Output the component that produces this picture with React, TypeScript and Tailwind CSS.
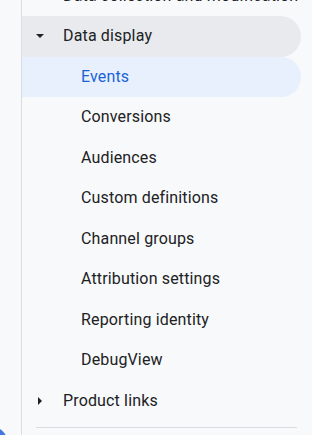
import React from 'react';

const subItems = [
  'Events',
  'Conversions',
  'Audiences',
  'Custom definitions',
  'Channel groups',
  'Attribution settings',
  'Reporting identity',
  'DebugView',
];

const Caret = ({ open }: { open: boolean }) => (
  <svg width="8" height="8" viewBox="0 0 8 8" className="shrink-0" style={{ transform: open ? undefined : 'rotate(-90deg)' }}>
    <path d="M0 2h8L4 6z" fill="#202124" />
  </svg>
);

const App = () => {
  return (
    <div className="relative w-[312px] h-[435px] overflow-hidden bg-[#f8f9fa] flex" style={{ fontFamily: 'Roboto, "Noto Sans", sans-serif' }}>
      <div className="w-[22px] shrink-0 border-r border-[#dadce0]" />
      <div className="flex-1 min-w-0 -mt-[24.5px] text-[16px] tracking-[0.15px]">
        <div className="h-[40.5px] flex items-center pl-[41px] pr-[4px] text-[#202124]">
          <span className="truncate">Data collection and modification</span>
        </div>
        <div className="h-[40.5px] mr-[11px] rounded-r-full bg-[#e8eaed] flex items-center pl-[14px] text-[#202124]">
          <Caret open />
          <span className="ml-[19px]">Data display</span>
        </div>
        {subItems.map((item, i) => (
          <div
            key={item}
            className={
              i === 0
                ? 'h-[40.5px] mr-[11px] rounded-r-full bg-[#e8f0fe] flex items-center pl-[59px] text-[#1a63d6]'
                : 'h-[40.5px] mr-[11px] flex items-center pl-[59px] text-[#202124]'
            }
          >
            {item}
          </div>
        ))}
        <div className="h-[40.5px] mr-[11px] flex items-center pl-[14px] text-[#202124]">
          <Caret open={false} />
          <span className="ml-[19px]">Product links</span>
        </div>
        <div className="mt-[6px] ml-[14px] mr-[15px] border-t border-[#dadce0]" />
      </div>
      <div className="absolute left-[-40px] top-[424px] w-[50px] h-[50px] rounded-full bg-[#4479e4]" />
    </div>
  );
};

export default App;
